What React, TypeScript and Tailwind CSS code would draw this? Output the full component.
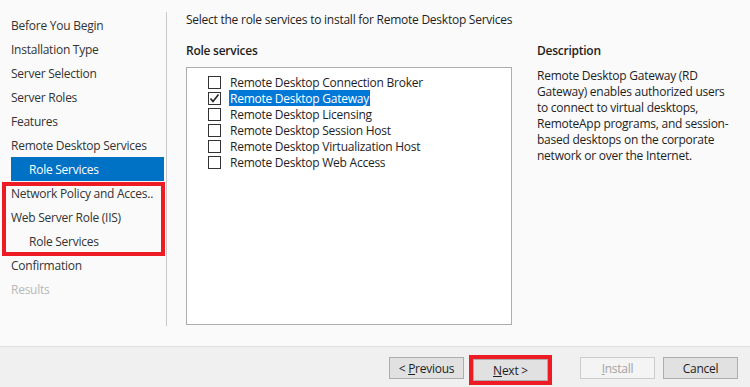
import { ReactNode } from "react";

const navItems: { label: string; sub?: boolean; active?: boolean; disabled?: boolean }[] = [
  { label: "Before You Begin" },
  { label: "Installation Type" },
  { label: "Server Selection" },
  { label: "Server Roles" },
  { label: "Features" },
  { label: "Remote Desktop Services" },
  { label: "Role Services", sub: true, active: true },
];

const navAfter: { label: string; sub?: boolean; disabled?: boolean }[] = [
  { label: "Confirmation" },
  { label: "Results", disabled: true },
];

const services = [
  { label: "Remote Desktop Connection Broker" },
  { label: "Remote Desktop Gateway", checked: true, selected: true },
  { label: "Remote Desktop Licensing" },
  { label: "Remote Desktop Session Host" },
  { label: "Remote Desktop Virtualization Host" },
  { label: "Remote Desktop Web Access" },
];

function NavItem({ label, sub, active, disabled }: { label: string; sub?: boolean; active?: boolean; disabled?: boolean }) {
  return (
    <div className="h-6 pl-[11px] pr-[2px]">
      <div
        className={
          "h-6 pt-[2px] flex items-center whitespace-nowrap overflow-hidden " +
          (sub ? "pl-[18px] " : "") +
          (active ? "bg-[#0072c6] text-white " : disabled ? "text-[#b8b8b8] " : "text-[#333333] ")
        }
      >
        {label}
      </div>
    </div>
  );
}

function Checkbox({ checked }: { checked?: boolean }) {
  return (
    <div className="w-[13px] h-[13px] border border-[#333333] bg-white flex items-center justify-center shrink-0">
      {checked && (
        <svg width="11" height="11" viewBox="0 0 11 11">
          <path d="M1.5 5.5 L4 8.5 L9.5 1.5" fill="none" stroke="#222" strokeWidth="1.6" />
        </svg>
      )}
    </div>
  );
}

function Button({ children, disabled }: { children: ReactNode; disabled?: boolean }) {
  return (
    <div
      className={
        "w-[75px] h-[22px] pt-px flex items-center justify-center border " +
        (disabled ? "border-[#cccccc] bg-[#f4f4f4] text-[#a3a3a3]" : "border-[#adadad] bg-[#e1e1e1] text-[#1e1e1e]")
      }
    >
      {children}
    </div>
  );
}

export default function App() {
  return (
    <div
      className="w-[750px] h-[387px] bg-[#fafafa] flex flex-col text-[12px] leading-4 tracking-[-0.25px] text-[#1e1e1e] overflow-hidden"
      style={{ fontFamily: "'Open Sans', 'Noto Sans', sans-serif" }}
    >
      <div className="flex h-[346px]">
        <div className="w-[167px] shrink-0 pt-[12px]">
          <div className="border-r border-[#c8c8c8] h-[314px] pt-px">
            {navItems.map((n) => (
              <NavItem key={n.label} {...n} />
            ))}
            <div className="relative">
              <NavItem label="Network Policy and Acces.." />
              <NavItem label="Web Server Role (IIS)" />
              <NavItem label="Role Services" sub />
              <div className="absolute left-[2px] right-[1px] top-px bottom-[-3px] border-4 border-[#ed1c24]" />
            </div>
            {navAfter.map((n) => (
              <NavItem key={n.label} {...n} />
            ))}
          </div>
        </div>

        <div className="flex-1 pl-[19px] pt-[12px]">
          <div className="h-4 whitespace-nowrap">Select the role services to install for Remote Desktop Services</div>
          <div className="flex mt-[15px]">
            <div className="w-[326px]">
              <div className="font-semibold h-4">Role services</div>
              <div className="mt-[8px] h-[258px] border border-[#abadb3] bg-white pt-[6px] pl-[21px]">
                {services.map((s) => (
                  <div key={s.label} className="h-4 flex items-center">
                    <Checkbox checked={s.checked} />
                    <div
                      className={
                        "ml-[8px] px-px h-4 pt-px flex items-center whitespace-nowrap " +
                        (s.selected ? "bg-[#0078d7] text-white" : "")
                      }
                    >
                      {s.label}
                    </div>
                  </div>
                ))}
              </div>
            </div>
            <div className="ml-[25px] w-[200px]">
              <div className="font-semibold h-4">Description</div>
              <div className="mt-[9px] whitespace-nowrap">
                <div>Remote Desktop Gateway (RD</div>
                <div>Gateway) enables authorized users</div>
                <div>to connect to virtual desktops,</div>
                <div>RemoteApp programs, and session-</div>
                <div>based desktops on the corporate</div>
                <div>network or over the Internet.</div>
              </div>
            </div>
          </div>
        </div>
      </div>

      <div className="flex-1 bg-[#f0f0f0] border-t border-[#dfdfdf] flex items-start pt-[10px] pl-[389px]">
        <Button>
          &lt;&nbsp;<span className="underline">P</span>revious
        </Button>
        <div className="ml-[5px] mt-[-2px] border-4 border-[#ed1c24]">
          <Button>
            <span className="underline">N</span>ext &gt;
          </Button>
        </div>
        <div className="ml-[28px]">
          <Button disabled>
            <span className="underline">I</span>nstall
          </Button>
        </div>
        <div className="ml-[8px]">
          <Button>Cancel</Button>
        </div>
      </div>
    </div>
  );
}
